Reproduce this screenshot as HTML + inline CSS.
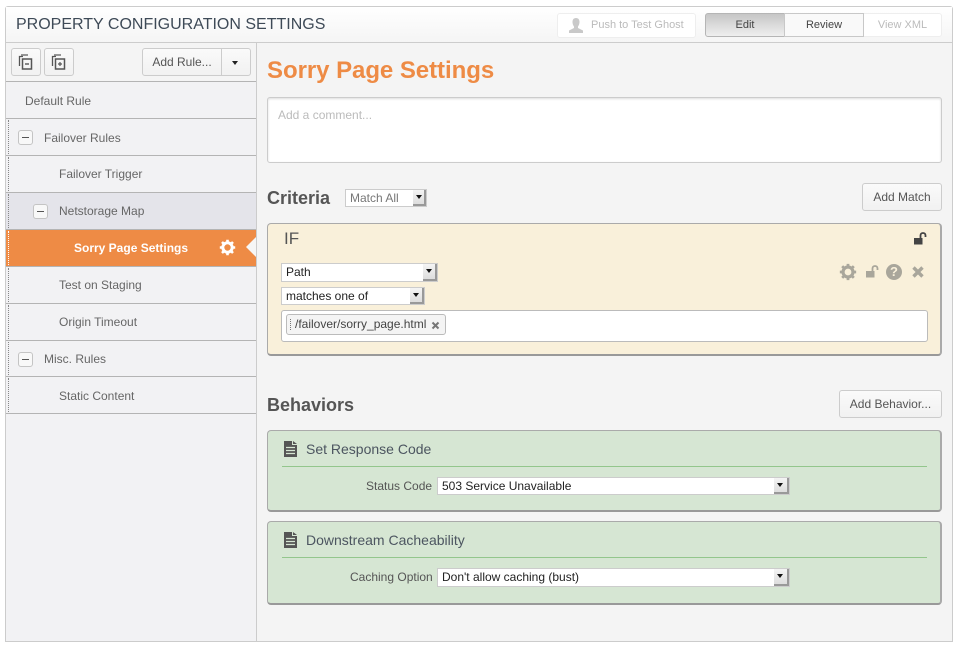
<!DOCTYPE html>
<html><head><meta charset="utf-8"><style>
*{box-sizing:border-box}
html,body{margin:0;padding:0;background:#fff}
body{width:959px;height:647px;position:relative;overflow:hidden;font-family:"Liberation Sans",sans-serif;color:#555}
.a{position:absolute}
.t{position:absolute;white-space:nowrap;line-height:16px}
.row{position:absolute;left:6px;width:250px;height:37px;border-bottom:1px solid #b4b4b4;font-size:12px;color:#666;line-height:36px;white-space:nowrap}
.dots{position:absolute;left:2px;top:1px;bottom:1px;border-left:1px dotted #888}
.pm{position:absolute;width:15px;height:15px;border:1px solid #c4c4c4;border-radius:3px;background:#f8f8f8;top:11px}
.pm:after{content:"";position:absolute;left:3px;top:6px;width:7px;height:1px;background:#555}
.btn{position:absolute;border:1px solid #ccc;border-radius:3px;background:linear-gradient(#fafafa,#f1f1f1);font-size:12px;color:#555;text-align:center;white-space:nowrap}
.sel{position:absolute;background:#fff;border:1px solid #ccc;font-size:12px;color:#222;white-space:nowrap;line-height:16px;padding-left:4px}
.sel i{position:absolute;right:0;top:0;bottom:0;width:13px;background:linear-gradient(#f4f4f4,#ddd);border-right:2px solid #999;border-bottom:2px solid #999}
.sel i:after{content:"";position:absolute;left:3px;top:5px;border:3px solid transparent;border-top:4px solid #111;border-bottom:0}
.card{position:absolute;left:267px;width:675px;border:1px solid #aaa;border-radius:4px;border-bottom:2px solid #999;border-right:2px solid #aaa}
.green{background:#d6e6d3}
.hr{position:absolute;left:14px;width:645px;height:1px;background:#93c68c}
</style></head><body>
<!-- frame -->
<div class="a" style="left:5px;top:6px;width:948px;height:636px;border:1px solid #ccc;border-radius:3px 3px 0 0;background:#f4f4f4"></div>
<div class="a" style="left:6px;top:7px;width:946px;height:36px;background:linear-gradient(#fff,#f5f5f5);border-bottom:1px solid #ccc"></div>
<div class="t" style="left:16px;top:16px;font-size:16px;color:#3e4a57;line-height:18px">PROPERTY CONFIGURATION SETTINGS</div>

<!-- header right -->
<div class="a" style="left:557px;top:13px;width:139px;height:25px;border:1px solid #eee;border-radius:3px;background:#fff"></div>
<svg class="a" style="left:567px;top:17px" width="18" height="17" viewBox="0 0 18 17"><path d="M9 1c2.400 0 3.500 1.800 3.500 4s-1 4-1.500 4.500v1.500l5 2.500v2.500H2v-2.500l5-2.500V9.500C6.500 9 5.500 7.200 5.500 5S6.600 1 9 1z" fill="#c9c9c9"/></svg>
<div class="t" style="left:591px;top:17px;font-size:11px;color:#bbb">Push to Test Ghost</div>
<div class="a" style="left:705px;top:13px;width:80px;height:24px;border:1px solid #b5b5b5;border-radius:3px 0 0 3px;background:linear-gradient(#c6c6c6,#efefef);font-size:11px;color:#444;text-align:center;line-height:22px">Edit</div>
<div class="a" style="left:784px;top:13px;width:80px;height:24px;border:1px solid #c8c8c8;background:#f9f9f9;font-size:11px;color:#444;text-align:center;line-height:22px">Review</div>
<div class="a" style="left:864px;top:13px;width:78px;height:24px;border:1px solid #eee;border-left:0;border-radius:0 3px 3px 0;background:#fff;font-size:11px;color:#bbb;text-align:center;line-height:22px">View XML</div>

<!-- sidebar -->
<div class="a" style="left:6px;top:43px;width:251px;height:598px;background:#f2f2f4;border-right:1px solid #ccc"></div>
<div class="a" style="left:6px;top:43px;width:250px;height:39px;background:#f4f4f4;border-bottom:1px solid #b4b4b4"></div>
<div class="btn" style="left:11px;top:48px;width:30px;height:28px"></div>
<div class="btn" style="left:44px;top:48px;width:30px;height:28px"></div>
<svg class="a" style="left:18px;top:54px" width="16" height="17" viewBox="0 0 16 17" fill="none" stroke="#555"><path d="M5 2.500H1.500V12" stroke-width="1.300"/><rect x="4.500" y="5" width="9" height="10" stroke-width="1.500"/><path d="M7 10h4" stroke-width="1.400"/><path d="M3 1h7" stroke-width="1.200"/></svg>
<svg class="a" style="left:51px;top:54px" width="16" height="17" viewBox="0 0 16 17" fill="none" stroke="#555"><path d="M5 2.500H1.500V12" stroke-width="1.300"/><rect x="4.500" y="5" width="9" height="10" stroke-width="1.500"/><path d="M7 10h4M9 8v4" stroke-width="1.200"/><path d="M3 1h7" stroke-width="1.200"/></svg>
<div class="btn" style="left:142px;top:48px;width:80px;height:28px;border-radius:3px 0 0 3px;line-height:26px">Add Rule...</div>
<div class="btn" style="left:221px;top:48px;width:30px;height:28px;border-radius:0 3px 3px 0"></div>
<div class="a" style="left:232px;top:61px;border:3.500px solid transparent;border-top:4px solid #222;border-bottom:0"></div>

<div class="row" style="top:82px"><span class="t" style="left:19px;top:11px">Default Rule</span></div>
<div class="row" style="top:119px"><div class="dots"></div><div class="pm" style="left:12px"></div><span class="t" style="left:38px;top:11px">Failover Rules</span></div>
<div class="row" style="top:156px"><div class="dots"></div><span class="t" style="left:53px;top:10px">Failover Trigger</span></div>
<div class="row" style="top:193px;background:#e4e4ea"><div class="dots"></div><div class="pm" style="left:27px"></div><span class="t" style="left:53px;top:10px">Netstorage Map</span></div>
<div class="row" style="top:230px;background:#ee8b45;color:#fff;font-weight:bold;border-bottom-color:#b4b4b4"><div class="dots" style="border-color:#fff"></div><span class="t" style="left:68px;top:10px">Sorry Page Settings</span>
<svg style="position:absolute;left:213px;top:9px" width="17" height="17" viewBox="0 0 17 17"><circle cx="8.500" cy="8.500" r="4.700" fill="none" stroke="#fff" stroke-width="3"/><path d="M8.500 .8v3M8.500 13.200v3M.8 8.500h3M13.200 8.500h3M3 3l2.200 2.200M11.800 11.800 14 14M14 3l-2.200 2.200M5.200 11.800 3 14" stroke="#fff" stroke-width="2.600"/></svg>
<div style="position:absolute;right:0;top:7px;border:10px solid transparent;border-right:10px solid #f6f6f6;border-left:0"></div></div>
<div class="row" style="top:267px"><div class="dots"></div><span class="t" style="left:53px;top:10px">Test on Staging</span></div>
<div class="row" style="top:304px"><div class="dots"></div><span class="t" style="left:53px;top:10px">Origin Timeout</span></div>
<div class="row" style="top:341px;height:36px"><div class="dots"></div><div class="pm" style="left:12px"></div><span class="t" style="left:38px;top:10px">Misc. Rules</span></div>
<div class="row" style="top:377px"><div class="dots"></div><span class="t" style="left:53px;top:11px">Static Content</span></div>

<!-- main -->
<div class="t" style="left:267px;top:57px;font-size:24px;line-height:28px;font-weight:bold;color:#ee8b45;letter-spacing:-.05px">Sorry Page Settings</div>
<div class="a" style="left:267px;top:97px;width:675px;height:66px;background:#fff;border:1px solid #ccc;border-radius:3px;box-shadow:inset 0 1px 2px #ddd"></div>
<div class="t" style="left:278px;top:107px;font-size:12px;color:#bbb">Add a comment...</div>

<div class="t" style="left:267px;top:188px;font-size:18px;line-height:21px;font-weight:bold;color:#555">Criteria</div>
<div class="sel" style="left:345px;top:189px;width:82px;height:18px;color:#777;border-width:1px"><i></i>Match All</div>
<div class="btn" style="left:862px;top:183px;width:80px;height:28px;line-height:26px">Add Match</div>

<div class="card" style="top:223px;height:133px;background:#f9f0da"></div>
<div class="t" style="left:284px;top:229px;font-size:17px;line-height:20px;color:#555">IF</div>
<svg class="a" style="left:913px;top:232px" width="14" height="13" viewBox="0 0 14 13"><path d="M1 6h8.500v6.500H1z" fill="#444"/><path d="M7.500 6V3.500C7.500 2 8.500 1 10 1s2.500 1 2.500 2.500V5" fill="none" stroke="#444" stroke-width="1.800"/></svg>
<div class="sel" style="left:281px;top:263px;width:157px;height:19px"><i style="width:14px"></i>Path</div>
<div class="sel" style="left:281px;top:287px;width:144px;height:18px"><i style="width:14px"></i>matches one of</div>
<svg class="a" style="left:839px;top:263px" width="18" height="18" viewBox="0 0 17 17"><circle cx="8.500" cy="8.500" r="4.700" fill="none" stroke="#a9a69b" stroke-width="3"/><path d="M8.500 .8v3M8.500 13.200v3M.8 8.500h3M13.200 8.500h3M3 3l2.200 2.200M11.800 11.800 14 14M14 3l-2.200 2.200M5.200 11.800 3 14" stroke="#a9a69b" stroke-width="2.600"/></svg>
<svg class="a" style="left:865px;top:265px" width="14" height="13" viewBox="0 0 14 13"><path d="M1 6h8.500v6.500H1z" fill="#a9a69b"/><path d="M7.500 6V3.500C7.500 2 8.500 1 10 1s2.500 1 2.500 2.500V5" fill="none" stroke="#a9a69b" stroke-width="1.800"/></svg>
<div class="a" style="left:886px;top:264px;width:16px;height:16px;border-radius:50%;background:#a9a69b;color:#f9f0da;font-size:13px;font-weight:bold;text-align:center;line-height:16px">?</div>
<svg class="a" style="left:911px;top:265px" width="14" height="14" viewBox="0 0 14 14"><path d="M2.500 2.500l9 9M11.500 2.500l-9 9" stroke="#a9a69b" stroke-width="3.400"/></svg>
<div class="a" style="left:281px;top:310px;width:647px;height:32px;background:#fff;border:1px solid #bbb;border-radius:3px"></div>
<div class="a" style="left:286px;top:314px;width:160px;height:21px;background:#f4f4f4;border:1px solid #bbb;border-radius:3px"></div>
<div class="a" style="left:290px;top:319px;height:11px;border-left:1px dotted #777"></div>
<div class="t" style="left:295px;top:316px;font-size:12px;color:#444">/failover/sorry_page.html</div>
<svg class="a" style="left:431px;top:321px" width="9" height="9" viewBox="0 0 9 9"><path d="M1.500 1.500l6 6M7.500 1.500l-6 6" stroke="#777" stroke-width="2"/></svg>

<div class="t" style="left:267px;top:395px;font-size:18px;line-height:21px;font-weight:bold;color:#555">Behaviors</div>
<div class="btn" style="left:839px;top:390px;width:103px;height:28px;line-height:26px">Add Behavior...</div>

<div class="card green" style="top:430px;height:82px"><div class="hr" style="top:35px"></div></div>
<svg class="a" style="left:284px;top:441px" width="13" height="16" viewBox="0 0 13 16"><path d="M0 0h8v4h5v12H0z" fill="#555"/><path d="M9 0l4 3H9z" fill="#555"/><path d="M2 6.500h9M2 9.500h9M2 12.500h9" stroke="#d6e6d3" stroke-width="1.200"/></svg>
<div class="t" style="left:306px;top:441px;font-size:14px;color:#4c5560">Set Response Code</div>
<div class="t" style="left:366px;top:478px;font-size:12px;color:#555">Status Code</div>
<div class="sel" style="left:437px;top:477px;width:353px;height:18px"><i style="width:15px"></i>503 Service Unavailable</div>

<div class="card green" style="top:521px;height:84px"><div class="hr" style="top:35px"></div></div>
<svg class="a" style="left:284px;top:532px" width="13" height="16" viewBox="0 0 13 16"><path d="M0 0h8v4h5v12H0z" fill="#555"/><path d="M9 0l4 3H9z" fill="#555"/><path d="M2 6.500h9M2 9.500h9M2 12.500h9" stroke="#d6e6d3" stroke-width="1.200"/></svg>
<div class="t" style="left:306px;top:532px;font-size:14px;color:#4c5560">Downstream Cacheability</div>
<div class="t" style="left:350px;top:569px;font-size:12px;color:#555">Caching Option</div>
<div class="sel" style="left:437px;top:568px;width:353px;height:19px"><i style="width:15px"></i>Don't allow caching (bust)</div>
</body></html>
